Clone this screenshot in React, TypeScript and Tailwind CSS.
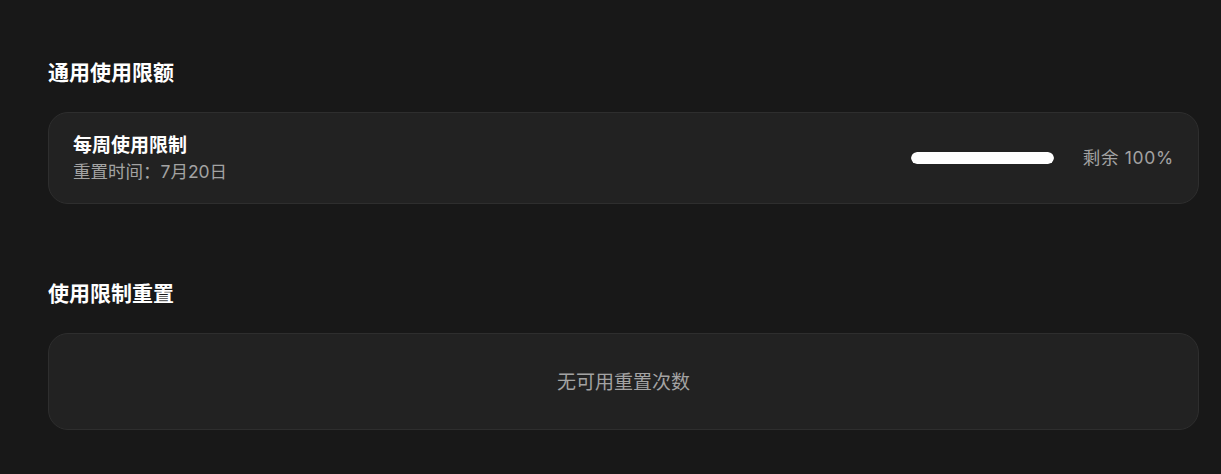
import React from "react";

const font = { fontFamily: '"Inter", "Noto Sans CJK SC", sans-serif' };

const UsageBar = ({ percent }: { percent: number }) => (
  <div className="h-3 w-[143px] rounded-full bg-[#3a3a3a] overflow-hidden">
    <div className="h-full rounded-full bg-white" style={{ width: `${percent}%` }} />
  </div>
);

const App = () => {
  const remaining = 100;

  return (
    <div className="min-h-[474px] w-full bg-[#181818] pl-12 pr-[22px] pt-[58px] pb-10" style={font}>
      {/* General usage limits */}
      <section className="flex flex-col gap-6">
        <h2 className="text-[21px] leading-[30px] font-bold text-white">通用使用限额</h2>
        <div className="flex h-[92px] items-center justify-between rounded-[20px] border border-[#2e2e2e] bg-[#222222] px-6">
          <div className="flex flex-col">
            <span className="text-[19px] leading-[27px] font-bold text-white">每周使用限制</span>
            <span className="text-[17.5px] leading-[26px] text-[#a3a3a3]">重置时间：7月20日</span>
          </div>
          <div className="flex items-center gap-[29px]">
            <UsageBar percent={remaining} />
            <span className="text-[17.5px] tracking-[0.04em] text-[#a3a3a3]">剩余 {remaining}%</span>
          </div>
        </div>
      </section>

      {/* Usage limit resets */}
      <section className="mt-[75px] flex flex-col gap-6">
        <h2 className="text-[21px] leading-[30px] font-bold text-white">使用限制重置</h2>
        <div className="flex h-[97px] items-center justify-center rounded-[20px] border border-[#2e2e2e] bg-[#222222]">
          <span className="text-[19px] leading-[28px] pt-[2px] text-[#a3a3a3]">无可用重置次数</span>
        </div>
      </section>
    </div>
  );
};

export default App;
